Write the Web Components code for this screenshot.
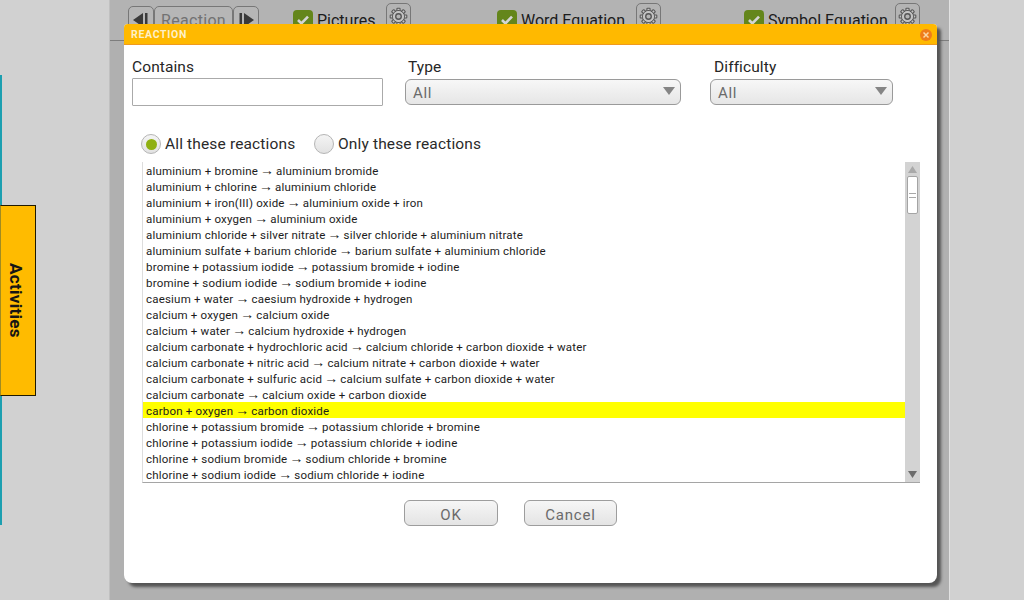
<!DOCTYPE html>
<html><head><meta charset="utf-8"><style>
html,body{margin:0;padding:0;height:100%}
body{width:1024px;height:600px;overflow:hidden;background:#d1d1d1;font-family:Roboto,"Open Sans",sans-serif;color:#222}
</style></head><body>
<app-page></app-page>
<script>
function def(name,css,html){
  customElements.define(name,class extends HTMLElement{
    constructor(){super();const r=this.attachShadow({mode:'open'});r.innerHTML='<style>'+css+'</style>'+html;}
  });
}
const teeth=Array.from({length:8},(_,i)=>`<rect x="10" y="1.500" width="4" height="5" rx=".8" transform="rotate(${i*45} 12 12)"/>`).join('');
const gear=`<svg width="19" height="19" viewBox="0 0 24 24"><g fill="#c4c4c4" stroke="#555" stroke-width="1.300">${teeth}<circle cx="12" cy="12" r="7.500"/></g><circle cx="12" cy="12" r="6.800" fill="#c4c4c4"/><circle cx="12" cy="12" r="3.500" fill="#b4b4b4" stroke="#555" stroke-width="1.700"/></svg>`;

def('gear-button',`:host{display:flex;align-items:center;justify-content:center;width:25px;height:27px;box-sizing:border-box;border:1px solid #777;border-radius:5px;background:#b4b4b4}`,gear);

def('check-option',`:host{display:flex;align-items:center;height:27px;font-size:16px;color:#1c1c1c;letter-spacing:0}
.b{width:20px;height:20px;border-radius:4px;background:#64861b;margin-right:4px;display:flex;align-items:center;justify-content:center}
.t{padding-top:1px}
.g{margin-left:var(--gap,11px);align-self:flex-start;margin-top:-3px}`,
`<span class="b"><svg width="14" height="12" viewBox="0 0 14 12"><path d="M2 6l3.400 3.400L12 2.600" fill="none" stroke="#d5d5d5" stroke-width="2.600"/></svg></span><span class="t"><slot></slot></span><gear-button class="g"></gear-button>`);

def('top-toolbar',`:host{display:flex;box-sizing:border-box;height:41px;border-bottom:1px solid #7d7d7d;padding:6px 0 0 18px;align-items:flex-start;background:#b3b3b3}
.nav{display:flex;height:27px}
.n{box-sizing:border-box;height:27px;border:1px solid #777;border-radius:5px;display:flex;align-items:center;justify-content:center;background:#b6b6b6;color:#727272;font-size:16px;letter-spacing:.3px;padding-top:1px}
.a{width:26px}.m{width:79px}
check-option:nth-of-type(1){margin-left:34px;width:204px}
check-option:nth-of-type(2){width:247px}
check-option:nth-of-type(3){--gap:7px}`,
`<div class="nav"><span class="n a"><svg width="18" height="14" viewBox="0 0 18 14"><path d="M11 0v14L1 7z" fill="#3a3a3a"/><rect x="13" y="0" width="2.500" height="14" fill="#3a3a3a"/></svg></span><span class="n m">Reaction</span><span class="n a"><svg width="18" height="14" viewBox="0 0 18 14"><rect x="2.500" y="0" width="2.500" height="14" fill="#3a3a3a"/><path d="M7 0v14l10-7z" fill="#3a3a3a"/></svg></span></div>
<check-option>Pictures</check-option><check-option>Word Equation</check-option><check-option>Symbol Equation</check-option>`);

def('side-tab',`:host{position:absolute;left:0;top:75px;width:2px;height:450px;background:#1c9fb0}
.t{position:absolute;left:0;top:130px;width:36px;height:191px;box-sizing:border-box;border:1px solid #1f1a00;border-left-color:#a08b22;background:#ffbb00;display:flex;align-items:center;justify-content:center;padding-right:4px}
span{writing-mode:vertical-rl;font:bold 17px Roboto,sans-serif;color:#161616;letter-spacing:.3px}`,
`<div class="t"><span>Activities</span></div>`);

def('field-label',`:host{display:block;font-size:15.500px;letter-spacing:.1px;color:#262626;line-height:18px;margin-bottom:3px}`,`<slot></slot>`);

def('select-box',`:host{display:flex;align-items:center;justify-content:space-between;box-sizing:border-box;height:26px;border:1.500px solid #9a9a9a;border-radius:6px;background:linear-gradient(#f7f7f7,#e6e6e6);padding:1px 5px 0 7px;font-size:15px;letter-spacing:.6px;color:#6a6a6a}
svg{margin-top:-3px}`,
`<slot></slot><svg width="12" height="8" viewBox="0 0 12 8"><path d="M0 0h12L6 8z" fill="#858585"/></svg>`);

def('radio-option',`:host{display:flex;align-items:center;font-size:15.500px;letter-spacing:.15px;color:#2a2a2a}
.c{width:18px;height:18px;border-radius:50%;border:1px solid #b5b5b5;background:linear-gradient(#f4f4f4,#e2e2e2);margin-right:4px;display:flex;align-items:center;justify-content:center}
.d{width:11px;height:11px;border-radius:50%;background:#8fb012;display:none}
:host([checked]) .d{display:block}`,
`<span class="c"><span class="d"></span></span><slot></slot>`);

def('reaction-row',`:host{display:block;height:16px;line-height:16px;padding-left:3px;font-size:11.500px;letter-spacing:.2px;color:#1c1c1c;white-space:nowrap}
:host([selected]){background:#ffff00}
::slotted(.ar){font:14px "Liberation Sans",sans-serif;letter-spacing:0;margin:0 -1px}`,`<slot></slot>`);

def('list-scrollbar',`:host{display:flex;flex-direction:column;align-items:center;width:15px;flex:none;background:#d3d3d3}
.thumb{width:11px;height:38px;box-sizing:border-box;border:1px solid #a4a4a4;border-radius:2px;background:#fff;display:flex;flex-direction:column;justify-content:center;gap:3px;padding:0 1px}
.thumb i{height:1px;background:#a8a8a8;display:block}
.up{margin-top:4px;margin-bottom:3px}
.sp{flex:1}
.dn{margin-bottom:4px}`,
`<svg class="up" width="9" height="7" viewBox="0 0 9 7"><path d="M4.500 0L9 7H0z" fill="#a9a9a9"/></svg><div class="thumb"><i></i><i></i></div><div class="sp"></div><svg class="dn" width="9" height="7" viewBox="0 0 9 7"><path d="M0 0h9L4.500 7z" fill="#6d6d6d"/></svg>`);

def('reaction-list',`:host{display:flex;height:321px;box-sizing:border-box;margin:0 17px 0 18px;border-left:1px solid #ddd;border-bottom:1px solid #a5a5a5}
.rows{flex:1;overflow:hidden}`,
`<div class="rows"><slot></slot></div><list-scrollbar></list-scrollbar>`);

def('push-button',`:host{display:flex;align-items:center;justify-content:center;box-sizing:border-box;height:26px;border:1.500px solid #9d9d9d;border-radius:6px;background:linear-gradient(#f6f6f6,#e4e4e4);font-size:15px;letter-spacing:.8px;color:#6a6a6a;padding-top:4px}`,`<slot></slot>`);

def('dialog-header',`:host{display:flex;align-items:center;justify-content:space-between;height:21px;box-sizing:border-box;background:#ffb900;border-bottom:1px solid #f09a1e;border-radius:4px 4px 0 0;padding:1px 5px 0 7px;font:bold 10.500px Roboto,sans-serif;letter-spacing:.7px;color:#fdf0c8}
.x{width:12px;height:12px;border-radius:50%;background:#ef7d1a;display:flex;align-items:center;justify-content:center}`,
`<slot></slot><span class="x"><svg width="8" height="8" viewBox="0 0 8 8"><path d="M1.500 1.500l5 5M6.500 1.500l-5 5" stroke="#fbd9a8" stroke-width="1.500"/></svg></span>`);

def('reaction-dialog',`:host{position:absolute;left:124px;top:24px;width:813px;height:559px;background:#fff;border-radius:4px 4px 8px 8px;box-shadow:4px 4px 3px #555;display:flex;flex-direction:column}
.fields{display:flex;padding:13px 0 0 8px;height:89px;box-sizing:border-box}
.f1{width:251px;margin-right:22px}
.f2{width:276px;margin-right:29px}
.f3{width:183px}
.f2 field-label{margin-left:3px}.f3 field-label{margin-left:4px}
.inp{height:28px;box-sizing:border-box;border:1px solid #aaa;background:#fff;border-radius:1px;margin-top:-1px}
.radios{display:flex;padding:0 0 0 17px;height:28px;box-sizing:border-box;align-items:flex-start}
radio-option:first-child{width:173px}
.btns{display:flex;padding:17px 0 0 280px;gap:26px}
.ok{width:94px}.ca{width:93px}`,
`<dialog-header>REACTION</dialog-header>
<div class="fields"><div class="f1"><field-label>Contains</field-label><div class="inp"></div></div>
<div class="f2"><field-label>Type</field-label><select-box>All</select-box></div>
<div class="f3"><field-label>Difficulty</field-label><select-box>All</select-box></div></div>
<div class="radios"><radio-option checked>All these reactions</radio-option><radio-option>Only these reactions</radio-option></div>
<reaction-list><slot></slot></reaction-list>
<div class="btns"><push-button class="ok">OK</push-button><push-button class="ca">Cancel</push-button></div>`);

const rows=["aluminium + bromine → aluminium bromide","aluminium + chlorine → aluminium chloride","aluminium + iron(III) oxide → aluminium oxide + iron","aluminium + oxygen → aluminium oxide","aluminium chloride + silver nitrate → silver chloride + aluminium nitrate","aluminium sulfate + barium chloride → barium sulfate + aluminium chloride","bromine + potassium iodide → potassium bromide + iodine","bromine + sodium iodide → sodium bromide + iodine","caesium + water → caesium hydroxide + hydrogen","calcium + oxygen → calcium oxide","calcium + water → calcium hydroxide + hydrogen","calcium carbonate + hydrochloric acid → calcium chloride + carbon dioxide + water","calcium carbonate + nitric acid → calcium nitrate + carbon dioxide + water","calcium carbonate + sulfuric acid → calcium sulfate + carbon dioxide + water","calcium carbonate → calcium oxide + carbon dioxide","carbon + oxygen → carbon dioxide","chlorine + potassium bromide → potassium chloride + bromine","chlorine + potassium iodide → potassium chloride + iodine","chlorine + sodium bromide → sodium chloride + bromine","chlorine + sodium iodide → sodium chloride + iodine"];

def('app-page',`:host{display:block;position:relative;width:1024px;height:600px;overflow:hidden}
.panel{margin-left:109px;width:841px;height:600px;box-sizing:border-box;border-left:1px solid #c0c0c0;border-right:1px solid #e2e2e2;background:#b0b0b0}`,
`<div class="panel"><top-toolbar></top-toolbar></div><side-tab></side-tab>
<reaction-dialog>${rows.map((t,i)=>`<reaction-row${i==15?' selected':''}>${t.replace('→','<span class="ar">→</span>')}</reaction-row>`).join('')}</reaction-dialog>`);
</script></body></html>
